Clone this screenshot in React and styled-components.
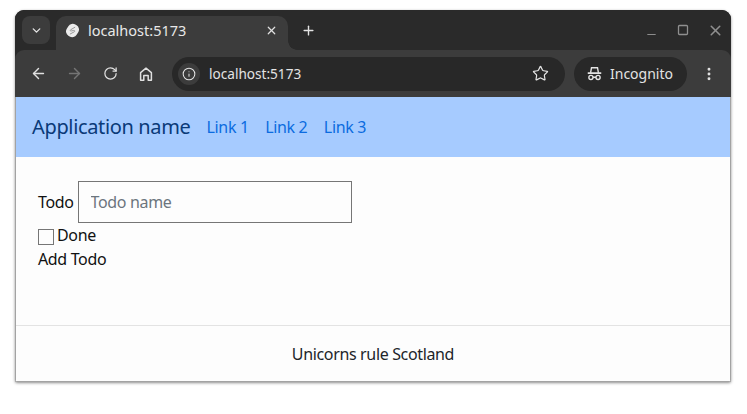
import React from "react";
import styled, { createGlobalStyle } from "styled-components";
import { ArrowLeft, ArrowRight, ChevronDown, Info, Minus, MoreVertical, Plus, RotateCw, Square, Star, X } from "lucide-react";

const GlobalStyle = createGlobalStyle`
  html, body {
    margin: 0;
    padding: 0;
    background: #ffffff;
    font-family: "Noto Sans", "Open Sans", sans-serif;
  }
`;

function App() {
  return (
    <Screen>
      <GlobalStyle />
      <Window>
        <TitleBar>
          <TabMenu>
            <ChevronDown size={13} strokeWidth={2.6} />
          </TabMenu>
          <Tab>
            <Favicon viewBox="0 0 16 16">
              <rect x="1.8" y="1" width="12.4" height="14" rx="5.4" fill="#ececec" transform="rotate(32 8 8)" />
              <path d="M10.8 4.4 6 7.2c-.9.6-.3 1.6.7 1.3l2.6-.6c1-.2 1.5.8.7 1.4l-4.8 2.6" stroke="#8a8a8a" strokeWidth="0.9" fill="none" />
            </Favicon>
            <TabTitle>localhost:5173</TabTitle>
            <X size={13} strokeWidth={2.2} color="#e0e0e0" />
          </Tab>
          <NewTab>
            <Plus size={15} strokeWidth={2.2} />
          </NewTab>
          <WindowControls>
            <WindowButton $low><Minus size={13} strokeWidth={1.8} /></WindowButton>
            <WindowButton><Square size={12} strokeWidth={2.6} /></WindowButton>
            <WindowButton><X size={17} strokeWidth={2.2} /></WindowButton>
          </WindowControls>
        </TitleBar>
        <Toolbar>
          <NavIcon><ArrowLeft size={17} strokeWidth={2} /></NavIcon>
          <NavIcon $disabled><ArrowRight size={17} strokeWidth={2} /></NavIcon>
          <NavIcon><RotateCw size={15} strokeWidth={2} /></NavIcon>
          <NavIcon>
            <svg width="16" height="16" viewBox="0 0 16 16" fill="none" stroke="currentColor" strokeWidth="1.5">
              <path d="M2.6 14.2V6.6L8 2.2l5.4 4.4v7.6h-3.2V9.4H5.8v4.8z" strokeLinejoin="round" />
            </svg>
          </NavIcon>
          <AddressBar>
            <SiteChip><Info size={14} strokeWidth={1.8} /></SiteChip>
            <AddressText>localhost:5173</AddressText>
            <Star size={17} strokeWidth={1.7} color="#e3e3e3" />
          </AddressBar>
          <IncognitoPill>
            <svg width="15" height="15" viewBox="0 0 16 16" fill="none" stroke="#e3e3e3" strokeWidth="1.5">
              <path d="M3.8 7.4 4.8 1.8h6.4l1 5.6" />
              <path d="M.8 7.6h14.4" strokeWidth="1.7" />
              <circle cx="4.2" cy="12.2" r="2.2" />
              <circle cx="11.8" cy="12.2" r="2.2" />
              <path d="M6.4 12h3.2" />
            </svg>
            <span>Incognito</span>
          </IncognitoPill>
          <MenuButton><MoreVertical size={16} strokeWidth={2.4} /></MenuButton>
        </Toolbar>
        <Page>
          <Header>
            <Brand>Application name</Brand>
            <NavLink href="#">Link 1</NavLink>
            <NavLink href="#">Link 2</NavLink>
            <NavLink href="#">Link 3</NavLink>
          </Header>
          <Main>
            <TodoRow>
              <label htmlFor="todo">Todo</label>
              <TodoInput id="todo" placeholder="Todo name" readOnly />
            </TodoRow>
            <DoneRow>
              <DoneBox type="checkbox" />
              <span>Done</span>
            </DoneRow>
            <AddTodo>Add Todo</AddTodo>
          </Main>
          <Footer>Unicorns rule Scotland</Footer>
        </Page>
      </Window>
    </Screen>
  );
}

const Screen = styled.div`
  width: 747px;
  height: 414px;
  padding: 10px 0 0 15px;
  box-sizing: border-box;
  overflow: hidden;
`;

const Window = styled.div`
  width: 716px;
  height: 372px;
  display: flex;
  flex-direction: column;
  border-radius: 9px 9px 2px 2px;
  overflow: hidden;
  background: #2a2a2a;
  box-shadow: 0 1px 3px rgba(0, 0, 0, 0.45);
`;

const TitleBar = styled.div`
  height: 40px;
  flex: none;
  display: flex;
  align-items: flex-start;
  padding: 6px 0 0 7px;
  box-sizing: border-box;
  background: #2a2a2a;
  color: #e3e3e3;
`;

const TabMenu = styled.div`
  width: 28px;
  height: 28px;
  margin-right: 6px;
  display: flex;
  align-items: center;
  justify-content: center;
  border-radius: 8px;
  background: #3c3c3c;
`;

const Tab = styled.div`
  position: relative;
  width: 232px;
  height: 34px;
  padding: 0 10px 6px 9px;
  box-sizing: border-box;
  display: flex;
  align-items: center;
  border-radius: 10px 10px 0 0;
  background: #3c3c3c;

  &::after {
    content: "";
    position: absolute;
    right: -9px;
    bottom: 0;
    width: 9px;
    height: 9px;
    background: radial-gradient(circle at 100% 0, transparent 8.5px, #3c3c3c 9px);
  }
`;

const Favicon = styled.svg`
  width: 15px;
  height: 15px;
  margin-right: 8px;
  flex: none;
`;

const TabTitle = styled.span`
  flex: 1;
  font-size: 14.5px;
  color: #e8e8e8;
`;

const NewTab = styled.div`
  width: 40px;
  height: 28px;
  display: flex;
  align-items: center;
  justify-content: center;
`;

const WindowControls = styled.div`
  margin-left: auto;
  height: 28px;
  display: flex;
  color: #8f8f8f;
`;

const WindowButton = styled.div`
  width: 32px;
  height: 28px;
  padding-top: ${(p) => (p.$low ? "9px" : "0")};
  box-sizing: border-box;
  display: flex;
  align-items: center;
  justify-content: center;
`;

const Toolbar = styled.div`
  height: 47px;
  flex: none;
  display: flex;
  align-items: center;
  padding: 0 8px 0 5px;
  box-sizing: border-box;
  background: #3c3c3c;
  border-radius: 9px 9px 0 0;
`;

const NavIcon = styled.div`
  width: 36px;
  height: 28px;
  display: flex;
  align-items: center;
  justify-content: center;
  color: ${(p) => (p.$disabled ? "#757575" : "#e0e0e0")};
`;

const AddressBar = styled.div`
  width: 393px;
  height: 34px;
  margin-left: 8px;
  padding: 0 16px 0 6px;
  box-sizing: border-box;
  display: flex;
  align-items: center;
  border-radius: 17px;
  background: #282828;
`;

const SiteChip = styled.div`
  width: 22px;
  height: 22px;
  margin-right: 9px;
  display: flex;
  align-items: center;
  justify-content: center;
  border-radius: 50%;
  background: #3c3c3c;
  color: #e3e3e3;
`;

const AddressText = styled.span`
  flex: 1;
  font-size: 13.6px;
  color: #e3e3e3;
`;

const IncognitoPill = styled.div`
  width: 113px;
  height: 34px;
  margin-left: 9px;
  padding-left: 13px;
  box-sizing: border-box;
  display: flex;
  align-items: center;
  gap: 8px;
  border-radius: 17px;
  background: #282828;
  font-size: 14px;
  color: #e3e3e3;
`;

const MenuButton = styled.div`
  margin-left: 14px;
  display: flex;
  color: #e0e0e0;
`;

const Page = styled.div`
  flex: 1;
  display: flex;
  flex-direction: column;
  background: #fdfdfd;
  border: solid #a3a3a3;
  border-width: 0 1px 1px;
  color: #212529;
  letter-spacing: -0.35px;
`;

const Header = styled.div`
  height: 60px;
  flex: none;
  display: flex;
  align-items: center;
  padding: 0 0 1px 16px;
  box-sizing: border-box;
  background: #a6cbff;
`;

const Brand = styled.span`
  margin-right: 16px;
  font-size: 20px;
  color: #0a3a78;
`;

const NavLink = styled.a`
  margin-right: 16.5px;
  font-size: 16px;
  color: #0b6be0;
  text-decoration: none;
`;

const Main = styled.div`
  flex: 1;
  padding: 24px 0 0 22px;
  font-size: 16px;
  color: #111111;
`;

const TodoRow = styled.div`
  display: flex;
  align-items: center;
  gap: 4px;
`;

const TodoInput = styled.input`
  width: 274px;
  height: 42px;
  padding: 0 12px;
  box-sizing: border-box;
  border: 1px solid #767676;
  background: #fdfdfd;
  font: inherit;
  letter-spacing: inherit;
  &::placeholder {
    color: #6c757d;
  }
`;

const DoneRow = styled.div`
  display: flex;
  align-items: center;
  height: 24px;
`;

const DoneBox = styled.input`
  appearance: none;
  width: 16px;
  height: 16px;
  margin: 3px 3px 0 0;
  border: 1px solid #767676;
  background: #fdfdfd;
`;

const AddTodo = styled.div`
  line-height: 24px;
`;

const Footer = styled.div`
  height: 56px;
  flex: none;
  display: flex;
  align-items: center;
  justify-content: center;
  border-top: 1px solid #e3e3e3;
  box-sizing: border-box;
  font-size: 16px;
  color: #212529;
`;

export default App;
